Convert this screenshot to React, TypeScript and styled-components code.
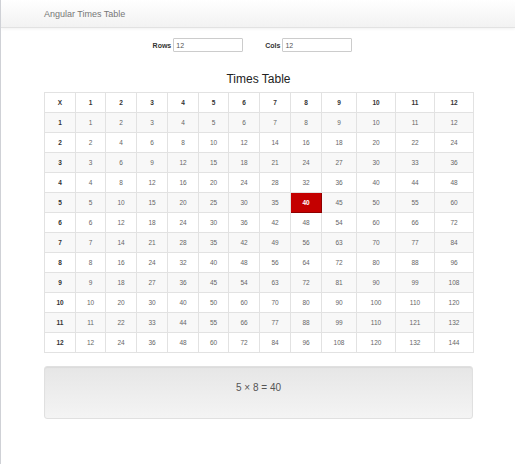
import React, { useState } from "react";
import styled, { createGlobalStyle } from "styled-components";

const GlobalStyle = createGlobalStyle`
  html, body {
    margin: 0;
    padding: 0;
    background: #fff;
    font-family: "Liberation Sans", Arial, sans-serif;
  }
`;

const colWidths = [31, 30, 31, 31, 31, 30, 31, 31, 31, 35, 39, 39, 39];

const App: React.FC = () => {
  const [rows, setRows] = useState("12");
  const [cols, setCols] = useState("12");
  const [pick, setPick] = useState<[number, number]>([5, 8]);

  const nRows = parseInt(rows, 10) || 0;
  const nCols = parseInt(cols, 10) || 0;
  const rowList = Array.from({ length: nRows }, (_, i) => i + 1);
  const colList = Array.from({ length: nCols }, (_, i) => i + 1);

  return (
    <Page>
      <GlobalStyle />
      <NavBar>
        <Brand>Angular Times Table</Brand>
      </NavBar>
      <Content>
        <Controls>
          <Field>
            <Label>Rows</Label>
            <Input value={rows} onChange={(e) => setRows(e.target.value)} />
          </Field>
          <Field>
            <Label>Cols</Label>
            <Input value={cols} onChange={(e) => setCols(e.target.value)} />
          </Field>
        </Controls>
        <Title>Times Table</Title>
        <Table>
          <colgroup>
            {[0, ...colList].map((c) => (
              <col key={c} style={{ width: colWidths[c] ?? 35 }} />
            ))}
          </colgroup>
          <thead>
            <tr>
              <HeadCell>X</HeadCell>
              {colList.map((c) => (
                <HeadCell key={c}>{c}</HeadCell>
              ))}
            </tr>
          </thead>
          <tbody>
            {rowList.map((r) => (
              <Row key={r} striped={r % 2 === 1}>
                <HeadCell>{r}</HeadCell>
                {colList.map((c) => (
                  <Cell
                    key={c}
                    active={pick[0] === r && pick[1] === c}
                    onClick={() => setPick([r, c])}
                  >
                    {r * c}
                  </Cell>
                ))}
              </Row>
            ))}
          </tbody>
        </Table>
        <Result>
          {pick[0]} × {pick[1]} = {pick[0] * pick[1]}
        </Result>
      </Content>
    </Page>
  );
};

export default App;

const Page = styled.div`
  height: 464px;
  border-left: 1px solid #cfd1d6;
  box-sizing: border-box;
  overflow: hidden;
`;

const NavBar = styled.div`
  height: 27px;
  background: linear-gradient(to bottom, #ffffff, #f2f2f2);
  border-bottom: 1px solid #e2e2e2;
  box-shadow: 0 1px 3px rgba(0, 0, 0, 0.06);
  display: flex;
  align-items: center;
  padding-left: 43px;
`;

const Brand = styled.div`
  font-size: 9px;
  color: #777;
`;

const Content = styled.div`
  width: 429px;
  margin: 0 auto;
  padding-left: 1px;
  display: flex;
  flex-direction: column;
`;

const Controls = styled.div`
  display: flex;
  justify-content: center;
  gap: 22px;
  margin-top: 10px;
  padding-right: 12px;
`;

const Field = styled.div`
  display: flex;
  align-items: center;
  gap: 2px;
`;

const Label = styled.label`
  font-size: 7px;
  font-weight: bold;
  color: #333;
`;

const Input = styled.input`
  width: 70px;
  height: 14px;
  box-sizing: border-box;
  border: 1px solid #ccc;
  border-radius: 1px;
  padding: 0 2px;
  font-family: "Liberation Sans", Arial, sans-serif;
  font-size: 7px;
  color: #555;
  outline: none;
`;

const Title = styled.h2`
  margin: 20px 0 5px;
  font-size: 12px;
  font-weight: normal;
  text-align: center;
  color: #222;
  line-height: 15px;
`;

const Table = styled.table`
  width: 429px;
  table-layout: fixed;
  border-collapse: collapse;
  border: 1px solid #ddd;
  font-size: 6.5px;
`;

const Row = styled.tr<{ striped: boolean }>`
  height: 20px;
  background: ${(p) => (p.striped ? "#f8f8f8" : "#fff")};
`;

const HeadCell = styled.th`
  height: 19px;
  padding: 0;
  border: 1px solid #e2e2e2;
  text-align: center;
  font-weight: bold;
  color: #333;
`;

const Cell = styled.td<{ active: boolean }>`
  height: 19px;
  padding: 0;
  border: 1px solid ${(p) => (p.active ? "#8f0000" : "#e2e2e2")};
  text-align: center;
  color: ${(p) => (p.active ? "#fff" : "#666")};
  font-weight: ${(p) => (p.active ? "bold" : "normal")};
  background: ${(p) => (p.active ? "#c40000" : "transparent")};
  cursor: pointer;
`;

const Result = styled.div`
  margin-top: 13px;
  height: 53px;
  box-sizing: border-box;
  border: 1px solid #e0e0e0;
  border-radius: 3px;
  background: linear-gradient(to bottom, #e6e6e6, #f4f4f4);
  box-shadow: inset 0 1px 1px rgba(0, 0, 0, 0.05);
  display: flex;
  align-items: flex-start;
  justify-content: center;
  padding-top: 15px;
  font-size: 10px;
  line-height: 12px;
  color: #555;
`;
